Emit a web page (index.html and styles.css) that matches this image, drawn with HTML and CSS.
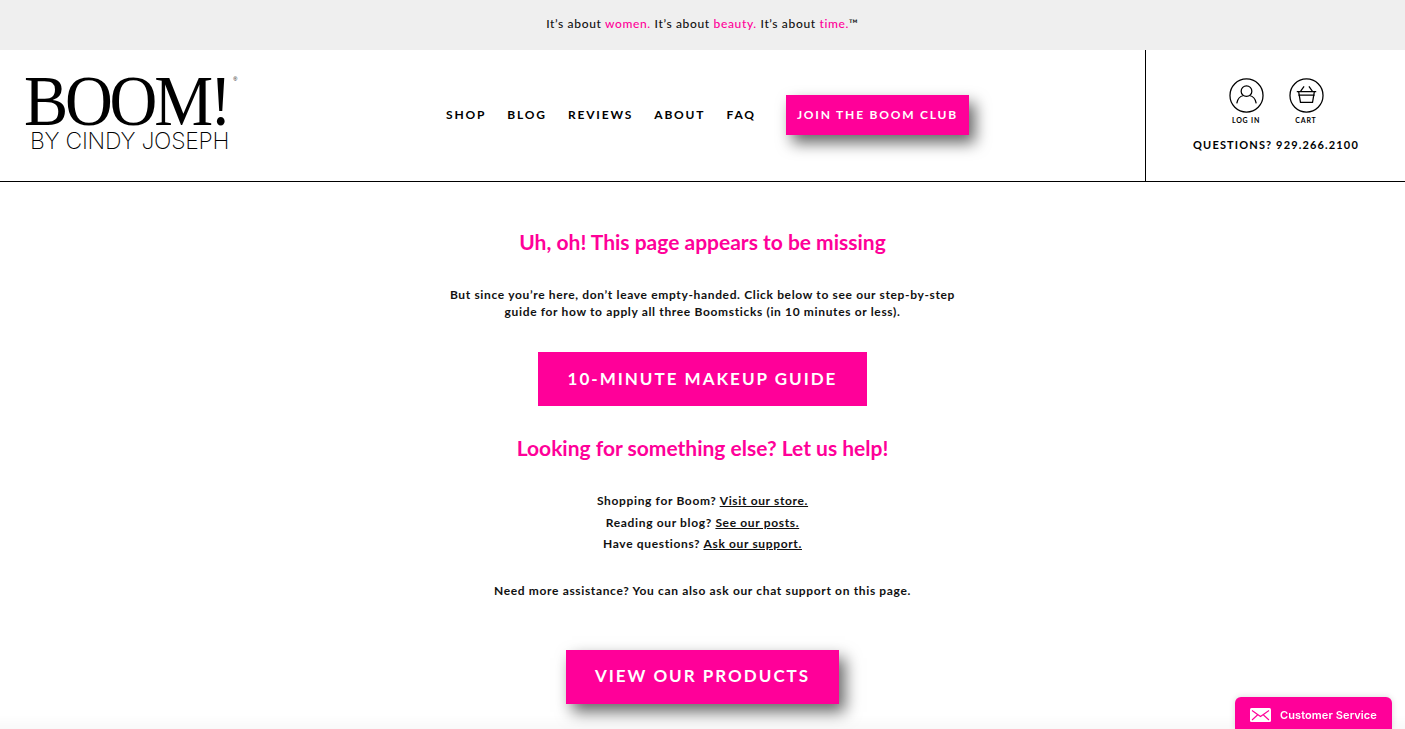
FILE: index.html
```html
<!DOCTYPE html>
<html lang="en">
<head>
    <meta charset="UTF-8">
    <meta name="viewport" content="width=device-width, initial-scale=1.0">
    <title>Page not found - Boom! by Cindy Joseph</title>
    <link rel="stylesheet" href="styles.css">
</head>
<body>
    <div class="promo-bar">
        It’s about <span class="pink">women.</span> It’s about <span class="pink">beauty.</span> It’s about <span class="pink">time.</span>™
    </div>

    <header class="site-header">
        <div class="header-main">
            <a class="logo" href="#">
                <span class="logo-boom">BOOM!<sup class="logo-reg">®</sup></span>
                <span class="logo-by">BY CINDY JOSEPH</span>
            </a>
            <nav class="main-nav">
                <a href="#">Shop</a>
                <a href="#">Blog</a>
                <a href="#">Reviews</a>
                <a href="#">About</a>
                <a href="#">FAQ</a>
                <a class="btn btn-club" href="#">Join the Boom Club</a>
            </nav>
        </div>
        <div class="header-side">
            <div class="account-links">
                <a class="account-link" href="#">
                    <svg class="account-icon" viewBox="0 0 36 36" aria-hidden="true">
                        <circle cx="18" cy="18" r="17"/>
                        <circle cx="18" cy="13.5" r="5.5"/>
                        <path d="M8 26c.8-4.800 3.800-7.400 7-8M28 26c-.8-4.800-3.800-7.400-7-8"/>
                    </svg>
                    <span>Log in</span>
                </a>
                <a class="account-link" href="#">
                    <svg class="account-icon" viewBox="0 0 36 36" aria-hidden="true">
                        <circle cx="18" cy="18" r="17"/>
                        <path d="M8 14h20M9.500 17.500h17M10 14.500l1.800 10.500h12.400l1.800-10.500M12 13.500l3.500-5M24 13.500l-3.500-5"/>
                    </svg>
                    <span>Cart</span>
                </a>
            </div>
            <div class="questions">Questions? 929.266.2100</div>
        </div>
    </header>

    <main class="content">
        <h2 class="heading-first">Uh, oh! This page appears to be missing</h2>
        <p class="intro">But since you’re here, don’t leave empty-handed. Click below to see our step-by-step<br>guide for how to apply all three Boomsticks (in 10 minutes or less).</p>
        <a class="btn btn-large btn-guide" href="#">10-Minute Makeup Guide</a>
        <h2 class="heading-second">Looking for something else? Let us help!</h2>
        <p class="help-links">
            Shopping for Boom? <a href="#">Visit our store.</a><br>
            Reading our blog? <a href="#">See our posts.</a><br>
            Have questions? <a href="#">Ask our support.</a>
        </p>
        <p class="assist">Need more assistance? You can also ask our chat support on this page.</p>
        <a class="btn btn-large btn-products" href="#">View Our Products</a>
    </main>

    <div class="bottom-fade"></div>

    <a class="support-tab" href="#">
        <svg class="support-icon" viewBox="0 0 21 14" aria-hidden="true">
            <rect width="21" height="14" rx="1.500" fill="#fff"/>
            <path d="M2 2.500l8.500 6 8.500-6M2 12l5.500-5M19 12l-5.500-5" fill="none" stroke="#ff0099" stroke-width="1.100"/>
        </svg>
        Customer Service
    </a>
</body>
</html>
```

FILE: styles.css
```css
html, body {
    height: 100%;
}
body {
    font-family: Lato, "Open Sans", sans-serif;
    margin: 0;
    padding: 0;
    height: 729px;
    overflow: hidden;
    background-color: #fff;
    color: #111;
}
a {
    color: inherit;
    text-decoration: none;
}
.pink {
    color: #ff0099;
}
.promo-bar {
    height: 50px;
    line-height: 48px;
    background-color: #efefef;
    text-align: center;
    font-size: 12px;
    font-weight: 500;
    letter-spacing: 0.65px;
}
.site-header {
    display: flex;
    height: 131px;
    border-bottom: 1px solid #000;
}
.header-main {
    flex: 1;
    display: flex;
    align-items: center;
    padding-left: 25px;
    padding-bottom: 2px;
}
.logo {
    display: flex;
    flex-direction: column;
    width: 214px;
    color: #000;
    margin-top: -3px;
}
.logo-boom {
    font-family: "Liberation Serif", serif;
    font-size: 72px;
    line-height: 56px;
    letter-spacing: -3.500px;
    margin-left: -1px;
    white-space: nowrap;
    transform: scaleX(0.92);
    transform-origin: left center;
}
.logo-reg {
    font-family: "Liberation Sans", sans-serif;
    font-size: 6px;
    letter-spacing: 0;
    vertical-align: 44px;
    line-height: 0;
    margin-left: 5px;
}
.logo-by {
    font-family: Inter, "Liberation Sans", sans-serif;
    font-weight: 200;
    font-size: 23px;
    line-height: 24px;
    letter-spacing: -0.250px;
    margin-left: 5px;
    white-space: nowrap;
}
.main-nav {
    display: flex;
    align-items: center;
    gap: 21.200px;
    margin-left: 207px;
    font-size: 12px;
    font-weight: 700;
    letter-spacing: 1.800px;
    text-transform: uppercase;
    color: #000;
}
.btn {
    display: block;
    background-color: #ff0099;
    color: #fff;
    font-weight: 700;
    text-transform: uppercase;
    text-align: center;
    box-shadow: 6px 8px 15px rgba(0, 0, 0, 0.6);
}
.btn-club {
    width: 183px;
    height: 40px;
    line-height: 39px;
    margin-left: 9px;
    font-size: 12px;
    letter-spacing: 1.800px;
}
.header-side {
    width: 260px;
    border-left: 1px solid #000;
    text-align: center;
    padding-top: 28px;
    padding-left: 1px;
    box-sizing: border-box;
}
.account-links {
    display: flex;
    justify-content: center;
    gap: 25px;
}
.account-link {
    width: 35px;
    display: flex;
    flex-direction: column;
    align-items: center;
    font-size: 7px;
    font-weight: 700;
    letter-spacing: 0.800px;
    text-transform: uppercase;
    white-space: nowrap;
    color: #000;
}
.account-icon {
    width: 35px;
    height: 35px;
    margin-bottom: 3px;
    fill: none;
    stroke: #000;
    stroke-width: 1.300;
}
.questions {
    margin-top: 14px;
    font-size: 11px;
    font-weight: 700;
    letter-spacing: 1.150px;
    text-transform: uppercase;
    color: #000;
}
.content {
    display: flex;
    flex-direction: column;
    align-items: center;
    text-align: center;
    font-size: 12px;
    font-weight: 700;
    letter-spacing: 0.650px;
}
.content h2 {
    margin: 0;
    color: #ff0099;
    font-size: 21px;
    line-height: 24px;
    font-weight: 700;
    letter-spacing: 0;
}
.heading-first {
    margin-top: 48px !important;
}
.intro {
    margin: 32px 0 0;
    line-height: 17px;
}
.btn-large {
    height: 54px;
    line-height: 54px;
    font-size: 17px;
    letter-spacing: 2px;
}
.btn-guide {
    width: 329px;
    margin-top: 32px;
    box-shadow: none;
}
.heading-second {
    margin-top: 30px !important;
}
.help-links {
    margin: 30px 0 0;
    line-height: 21.500px;
}
.help-links a {
    text-decoration: underline;
}
.assist {
    margin: 25px 0 0;
    line-height: 21px;
}
.btn-products {
    width: 273px;
    margin-top: 49px;
    line-height: 52px;
}
.bottom-fade {
    position: fixed;
    left: 0;
    right: 0;
    bottom: 0;
    height: 14px;
    background: linear-gradient(rgba(0, 0, 0, 0), rgba(0, 0, 0, 0.025));
    pointer-events: none;
}
.support-tab {
    position: fixed;
    right: 13px;
    bottom: 0;
    width: 157px;
    height: 32px;
    box-sizing: border-box;
    padding-left: 15px;
    padding-top: 4px;
    display: flex;
    align-items: center;
    gap: 9px;
    background-color: #ff0099;
    border-radius: 6px 6px 0 0;
    color: #fff;
    font-family: Inter, sans-serif;
    font-size: 11px;
    font-weight: 600;
    letter-spacing: 0.100px;
    box-shadow: 0 0 6px rgba(0, 0, 0, 0.15);
}
.support-icon {
    width: 21px;
    height: 14px;
}
```
